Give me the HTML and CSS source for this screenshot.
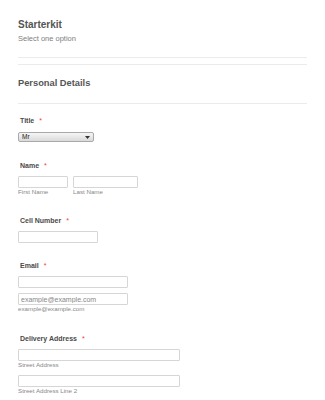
FILE: index.html
```html
<!DOCTYPE html>
<html lang="en">
<head>
    <meta charset="UTF-8">
    <meta name="viewport" content="width=device-width, initial-scale=1.0">
    <title>Starterkit</title>
    <link rel="stylesheet" href="styles.css">
</head>
<body>
    <form class="form">
        <div class="section section-intro">
            <h2 class="form-title">Starterkit</h2>
            <p class="form-subtitle">Select one option</p>
        </div>
        <div class="section section-personal">
            <h2 class="form-title">Personal Details</h2>
        </div>

        <div class="field field-title">
            <label class="label" for="title">Title <span class="required">*</span></label>
            <div class="select-wrap">
                <select id="title" class="select">
                    <option>Mr</option>
                    <option>Mrs</option>
                    <option>Ms</option>
                </select>
                <svg class="select-arrow" width="5" height="3" viewBox="0 0 5 3"><path d="M0 0h5L2.5 3z" fill="#333"/></svg>
            </div>
        </div>

        <div class="field field-name">
            <label class="label">Name <span class="required">*</span></label>
            <div class="row">
                <div>
                    <input type="text" class="input input-first">
                    <span class="sublabel">First Name</span>
                </div>
                <div>
                    <input type="text" class="input input-last">
                    <span class="sublabel">Last Name</span>
                </div>
            </div>
        </div>

        <div class="field field-cell">
            <label class="label" for="cell">Cell Number <span class="required">*</span></label>
            <input type="text" id="cell" class="input input-cell">
        </div>

        <div class="field field-email">
            <label class="label" for="email">Email <span class="required">*</span></label>
            <input type="email" id="email" class="input input-email">
            <input type="email" class="input input-email input-confirm" placeholder="example@example.com">
            <span class="sublabel">example@example.com</span>
        </div>

        <div class="field field-address">
            <label class="label">Delivery Address <span class="required">*</span></label>
            <input type="text" class="input input-address">
            <span class="sublabel">Street Address</span>
            <input type="text" class="input input-address input-line2">
            <span class="sublabel">Street Address Line 2</span>
        </div>
    </form>
</body>
</html>
```

FILE: styles.css
```css
body {
    margin: 0;
    font-family: "Liberation Sans", Arial, sans-serif;
    background: #fff;
    color: #555;
}
.form {
    width: 289px;
    padding: 0 18px;
}
.section {
    border-bottom: 1px solid #ebebeb;
}
.section-intro {
    padding: 19px 0 13px;
}
.section-personal {
    margin-top: 6px;
    border-top: 1px solid #ebebeb;
    padding: 12px 0 14px;
}
.form-title {
    margin: 0;
    font-size: 9.3px;
    line-height: 12px;
    font-weight: bold;
    color: #555;
}
.section-intro .form-title {
    font-size: 10px;
}
.form-subtitle {
    margin: 3px 0 0;
    font-size: 7.5px;
    line-height: 10px;
    color: #808080;
}
.field {
    display: flex;
    flex-direction: column;
    align-items: flex-start;
}
.field-title {
    margin-top: 12px;
}
.field-name {
    margin-top: 19px;
}
.field-cell {
    margin-top: 20px;
}
.field-email {
    margin-top: 18px;
}
.field-address {
    margin-top: 21px;
}
.label {
    display: block;
    padding-left: 2px;
    margin-bottom: 5px;
    font-size: 7px;
    line-height: 10px;
    font-weight: bold;
    color: #4a4a4a;
}
.required {
    margin-left: 3px;
    color: #f23a3c;
    font-weight: normal;
}
.field-title .label {
    margin-bottom: 6px;
}
.select-wrap {
    position: relative;
    width: 76px;
}
.select {
    display: block;
    width: 76px;
    height: 10px;
    margin: 0;
    padding: 0 0 0 3px;
    -webkit-appearance: none;
    appearance: none;
    border: 1px solid #a9a9a9;
    border-radius: 2px;
    background: linear-gradient(#f6f6f6, #dadada);
    font-family: "Liberation Sans", Arial, sans-serif;
    font-size: 6.5px;
    line-height: 8px;
    color: #222;
    box-sizing: border-box;
}
.select-arrow {
    position: absolute;
    right: 4px;
    top: 4px;
}
.row {
    display: flex;
    gap: 5px;
}
.row > div {
    display: flex;
    flex-direction: column;
}
.input {
    display: block;
    height: 12px;
    margin: 0;
    padding: 0 2px;
    border: 1px solid #d6d6d6;
    border-radius: 1px;
    background: #fff;
    box-sizing: border-box;
    font-family: "Liberation Sans", Arial, sans-serif;
    font-size: 7px;
    color: #444;
}
.input::placeholder {
    color: #888;
}
.input-first {
    width: 50px;
}
.input-last {
    width: 65px;
}
.input-cell {
    width: 80px;
}
.input-email {
    width: 110px;
}
.input-confirm {
    margin-top: 5px;
}
.input-address {
    width: 162px;
}
.input-line2 {
    margin-top: 6px;
}
.sublabel {
    display: block;
    font-size: 6.2px;
    line-height: 8px;
    color: #888;
}
```
